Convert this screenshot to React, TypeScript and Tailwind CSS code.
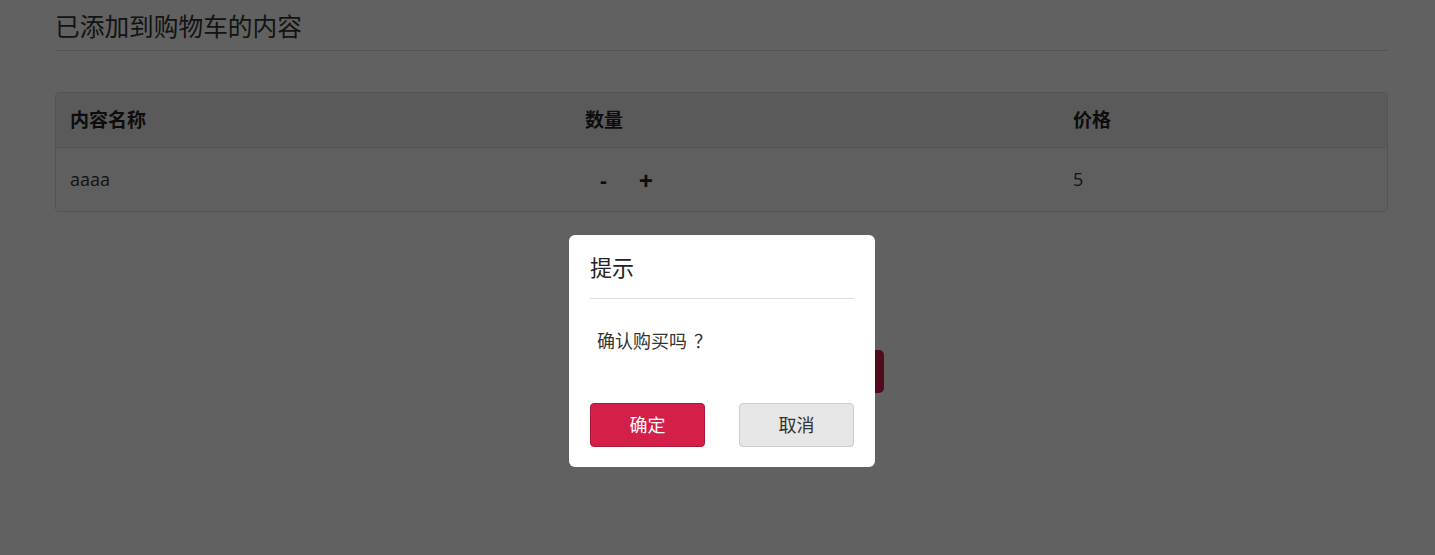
import { useState } from "react";

const font = "font-['Open_Sans','Noto_Sans_CJK_SC',sans-serif]";

type CartItem = { name: string; count: number; price: number };

function CartTable({ items }: { items: CartItem[] }) {
  return (
    <div className="mt-[41px] overflow-hidden rounded-[4px] border border-[#dddddd]">
      <div className="grid h-[55px] grid-cols-[515px_488px_1fr] items-center border-b border-[#dddddd] bg-[#ececec] text-[19px] font-bold text-[#222]">
        <div className="px-[14px]">内容名称</div>
        <div className="px-[14px]">数量</div>
        <div className="px-[14px]">价格</div>
      </div>
      {items.map((item) => (
        <div
          key={item.name}
          className="grid h-[63px] grid-cols-[515px_488px_1fr] items-center bg-[#fafafa] text-[18px] text-[#333]"
        >
          <div className="px-[14px]">{item.name}</div>
          <div className="flex items-center px-[14px]">
            <button type="button" className="px-[15px] pt-[2px] text-[21px] font-bold text-[#222]">
              -
            </button>
            <button type="button" className="ml-[17px] pt-[3px] text-[25px] font-bold text-[#222]">
              +
            </button>
          </div>
          <div className="px-[14px]">{item.price}</div>
        </div>
      ))}
    </div>
  );
}

function ConfirmDialog({ onClose }: { onClose: () => void }) {
  return (
    <div className="fixed inset-0 bg-[rgba(0,0,0,0.62)]">
      <div className="ml-[569px] mt-[235px] w-[306px] rounded-[6px] bg-white px-[21px] pb-[20px]">
        <div className="border-b border-[#dddddd] pb-[15px] pt-[16px] text-[22px] leading-[32px] text-[#222]">
          提示
        </div>
        <p className="pl-[7px] pt-[29px] text-[18px] leading-[27px] text-[#333]">
          确认购买吗<span className="pl-[7px]">？</span>
        </p>
        <div className="mt-[48px] flex justify-between">
          <button
            type="button"
            onClick={onClose}
            className="h-[44px] w-[115px] rounded-[4px] border border-[#ad1838] bg-[#d41f4a] text-[18px] text-white"
          >
            确定
          </button>
          <button
            type="button"
            onClick={onClose}
            className="h-[44px] w-[115px] rounded-[4px] border border-[#cccccc] bg-[#e6e6e6] text-[18px] text-[#333]"
          >
            取消
          </button>
        </div>
      </div>
    </div>
  );
}

export default function App() {
  const [open, setOpen] = useState(true);
  const items: CartItem[] = [{ name: "aaaa", count: 1, price: 5 }];

  return (
    <div className={`${font} min-h-[555px] bg-white`}>
      <div className="ml-[55px] w-[1333px]">
        <h2 className="border-b border-[#dddddd] pb-[5px] pt-[9px] text-[24.7px] font-normal leading-[36px] text-[#333]">
          已添加到购物车的内容
        </h2>
        <CartTable items={items} />
        <div className="mt-[138px] flex justify-end pr-[504px]">
          <button
            type="button"
            className="h-[43px] w-[200px] rounded-[5px] bg-[#d41f4a] text-[18px] text-white"
          >
            结算
          </button>
        </div>
      </div>
      {open ? <ConfirmDialog onClose={() => setOpen(false)} /> : null}
    </div>
  );
}
